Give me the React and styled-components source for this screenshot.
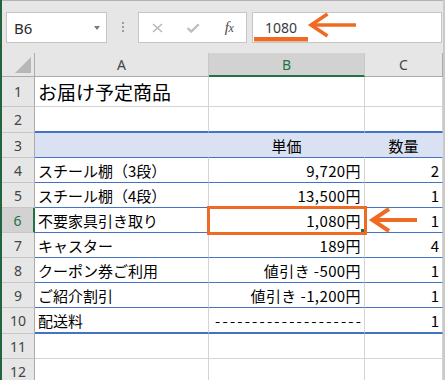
import React from "react";
import styled, { createGlobalStyle } from "styled-components";

const BLUE = "#4472c4";
const GRID = "#d4d4d4";
const ORANGE = "#ef6a22";
const GREEN = "#217346";

const GlobalStyle = createGlobalStyle`
  html, body {
    margin: 0;
    padding: 0;
    background: #e6e6e6;
  }
  body {
    font-family: "Noto Sans CJK JP", "Noto Sans", sans-serif;
  }
`;

const Frame = styled.div`
  width: 445px;
  height: 380px;
  overflow: hidden;
  box-sizing: border-box;
  border-left: 2px solid #22643e;
  border-right: 2px solid #c9c9c9;
  background: #e6e6e6;
  display: flex;
  flex-direction: column;
`;

const Toolbar = styled.div`
  height: 53px;
  flex: none;
  box-sizing: border-box;
  border-top: 1px solid #b3b3b3;
  padding: 11px 1px 0 4px;
  display: flex;
  align-items: flex-start;
`;

const Box = styled.div`
  height: 31px;
  box-sizing: border-box;
  background: #fff;
  border: 1px solid #c6c6c6;
  position: relative;
  display: flex;
  align-items: center;
`;

const NameBox = styled(Box)`
  width: 101px;
  padding: 0 6px 0 7px;
  justify-content: space-between;
  font-family: "Noto Sans", sans-serif;
  font-size: 15px;
  color: #2b2b2b;
`;

const DropArrow = styled.span`
  width: 0;
  height: 0;
  border-left: 3.5px solid transparent;
  border-right: 3.5px solid transparent;
  border-top: 4px solid #7a7a7a;
`;

const Dots = styled.div`
  margin: 10px 0 0 15px;
  display: flex;
  flex-direction: column;
  gap: 2px;
`;

const Dot = styled.span`
  width: 2px;
  height: 2px;
  background: #9c9c9c;
`;

const FuncBox = styled(Box)`
  width: 109px;
  margin-left: 14px;
  display: grid;
  grid-template-columns: repeat(3, 36px);
  justify-items: center;
`;

const Fx = styled.span`
  font-family: "Liberation Serif", serif;
  font-style: italic;
  font-size: 15px;
  color: #4a4a4a;
  letter-spacing: -0.5px;
  small {
    font-size: 12px;
  }
`;

const FormulaBox = styled(Box)`
  flex: 1;
  margin-left: 5px;
  padding-left: 12px;
  font-family: "Noto Sans", sans-serif;
  font-size: 14px;
  color: #3a3a44;
`;

const Overlay = styled.svg`
  position: absolute;
  left: 0;
  top: 0;
  overflow: visible;
  z-index: 3;
`;

const Sheet = styled.div`
  flex: none;
  display: grid;
  grid-template-columns: 33px 174px 156px 78px;
  grid-template-rows: 24px 30px 26px repeat(7, 25px) 26px 25px 25px;
`;

const Corner = styled.div`
  box-sizing: border-box;
  border-right: 1px solid #ababab;
  border-bottom: 1px solid #ababab;
  display: flex;
  align-items: flex-end;
  justify-content: flex-end;
  padding: 0 3px 3px 0;
`;

const CornerMark = styled.span`
  width: 16px;
  height: 16px;
  background: #b7b7b7;
  clip-path: polygon(100% 0, 100% 100%, 0 100%);
`;

const ColHead = styled.div`
  box-sizing: border-box;
  display: flex;
  align-items: center;
  justify-content: center;
  background: ${(p) => (p.$sel ? "#d2d2d2" : "#e6e6e6")};
  border-right: 1px solid ${(p) => (p.$last ? "#ababab" : "#c8c8c8")};
  border-bottom: ${(p) => (p.$sel ? `2px solid ${GREEN}` : "1px solid #ababab")};
  color: ${(p) => (p.$sel ? GREEN : "#444")};
  font-family: "Noto Sans", sans-serif;
  font-size: 14px;
`;

const RowHead = styled.div`
  box-sizing: border-box;
  display: flex;
  align-items: center;
  justify-content: center;
  background: ${(p) => (p.$sel ? "#d2d2d2" : "#e6e6e6")};
  border-right: ${(p) => (p.$sel ? `2px solid ${GREEN}` : "1px solid #ababab")};
  border-bottom: 1px solid #c6c6c6;
  color: ${(p) => (p.$sel ? GREEN : "#444")};
  font-family: "Noto Sans", sans-serif;
  font-size: 14px;
`;

const edges = {
  gray: `1px solid ${GRID}`,
  blue: `1px solid ${BLUE}`,
  thick: `2px solid ${BLUE}`,
};

const justify = { left: "flex-start", right: "flex-end", center: "center" };

const Cell = styled.div`
  position: relative;
  box-sizing: border-box;
  display: flex;
  align-items: center;
  justify-content: ${(p) => justify[p.$align]};
  padding: 0 ${(p) => (p.$align === "right" ? "3px" : "0")} 0
    ${(p) => (p.$align === "left" ? "3px" : "0")};
  background: ${(p) => (p.$fill ? "#d9e1f2" : "#fff")};
  border-right: 1px solid ${(p) => (p.$fill ? "#d9e1f2" : GRID)};
  border-bottom: ${(p) => edges[p.$edge]};
  font-size: ${(p) => (p.$title ? "19px" : "15px")};
  letter-spacing: ${(p) => (p.$num ? "0.4px" : "0")};
  color: #000;
  white-space: nowrap;
`;

const Dashes = styled.span`
  letter-spacing: 2.2px;
  margin-right: -2.2px;
`;

const SelectBox = styled.div`
  position: absolute;
  left: -2px;
  top: -2px;
  width: 160px;
  height: 29px;
  box-sizing: border-box;
  border: 3px solid ${ORANGE};
  z-index: 2;
`;

const FillHandle = styled.span`
  position: absolute;
  left: 152px;
  top: 21px;
  width: 3px;
  height: 3px;
  background: ${GREEN};
  z-index: 3;
`;

const rows = [
  { n: 1, a: "お届け予定商品", title: true, edge: "gray" },
  { n: 2, edge: "thick" },
  { n: 3, b: "単価", c: "数量", fill: true, edge: "blue" },
  { n: 4, a: "スチール棚（3段）", b: "9,720円", c: "2", edge: "blue" },
  { n: 5, a: "スチール棚（4段）", b: "13,500円", c: "1", edge: "blue" },
  { n: 6, a: "不要家具引き取り", b: "1,080円", c: "1", sel: true, edge: "blue" },
  { n: 7, a: "キャスター", b: "189円", c: "4", edge: "blue" },
  { n: 8, a: "クーポン券ご利用", b: "値引き -500円", c: "1", edge: "blue" },
  { n: 9, a: "ご紹介割引", b: "値引き -1,200円", c: "1", edge: "blue" },
  { n: 10, a: "配送料", b: "--------------------", dashes: true, c: "1", edge: "thick" },
  { n: 11, edge: "gray" },
  { n: 12, edge: "gray" },
];

function LeftArrow({ x, y, len, w }) {
  // x, y = point of the head vertex
  return (
    <>
      <path d={`M${x} ${y} H${x + len}`} stroke={ORANGE} strokeWidth={w} fill="none" />
      <polyline
        points={`${x + 16.5},${y - 11} ${x},${y} ${x + 16.5},${y + 11}`}
        stroke={ORANGE}
        strokeWidth={w}
        fill="none"
      />
    </>
  );
}

export default function App() {
  return (
    <>
      <GlobalStyle />
      <Frame>
        <Toolbar>
          <NameBox>
            B6
            <DropArrow />
          </NameBox>
          <Dots>
            <Dot />
            <Dot />
            <Dot />
          </Dots>
          <FuncBox>
            <svg width="11" height="10" viewBox="0 0 11 10">
              <path d="M1 1 L10 9 M10 1 L1 9" stroke="#b8b8b8" strokeWidth="1.6" fill="none" />
            </svg>
            <svg width="14" height="10" viewBox="0 0 14 10">
              <path d="M1.5 5 L5.2 8.6 L12.8 1.2" stroke="#bdbdbd" strokeWidth="2.3" fill="none" />
            </svg>
            <Fx>
              f<small>x</small>
            </Fx>
          </FuncBox>
          <FormulaBox>
            1080
            <Overlay width="110" height="31">
              <rect x="1" y="24" width="54" height="4.5" fill={ORANGE} />
              <LeftArrow x={58} y={12} len={45} w={3.5} />
            </Overlay>
          </FormulaBox>
        </Toolbar>

        <Sheet>
          <Corner>
            <CornerMark />
          </Corner>
          <ColHead>A</ColHead>
          <ColHead $sel>B</ColHead>
          <ColHead $last>C</ColHead>

          {rows.map((r) => (
            <React.Fragment key={r.n}>
              <RowHead $sel={r.sel}>{r.n}</RowHead>
              <Cell $align="left" $edge={r.edge} $fill={r.fill} $title={r.title}>
                {r.a}
              </Cell>
              <Cell
                $align={r.fill ? "center" : "right"}
                $edge={r.edge}
                $fill={r.fill}
                $num={!r.fill && !r.dashes}
              >
                {r.dashes ? <Dashes>{r.b}</Dashes> : r.b}
                {r.sel && (
                  <>
                    <SelectBox />
                    <FillHandle />
                  </>
                )}
              </Cell>
              <Cell $align={r.fill ? "center" : "right"} $edge={r.edge} $fill={r.fill}>
                {r.c}
                {r.sel && (
                  <Overlay width="60" height="25">
                    <LeftArrow x={7.5} y={12} len={44.5} w={4} />
                  </Overlay>
                )}
              </Cell>
            </React.Fragment>
          ))}
        </Sheet>
      </Frame>
    </>
  );
}
